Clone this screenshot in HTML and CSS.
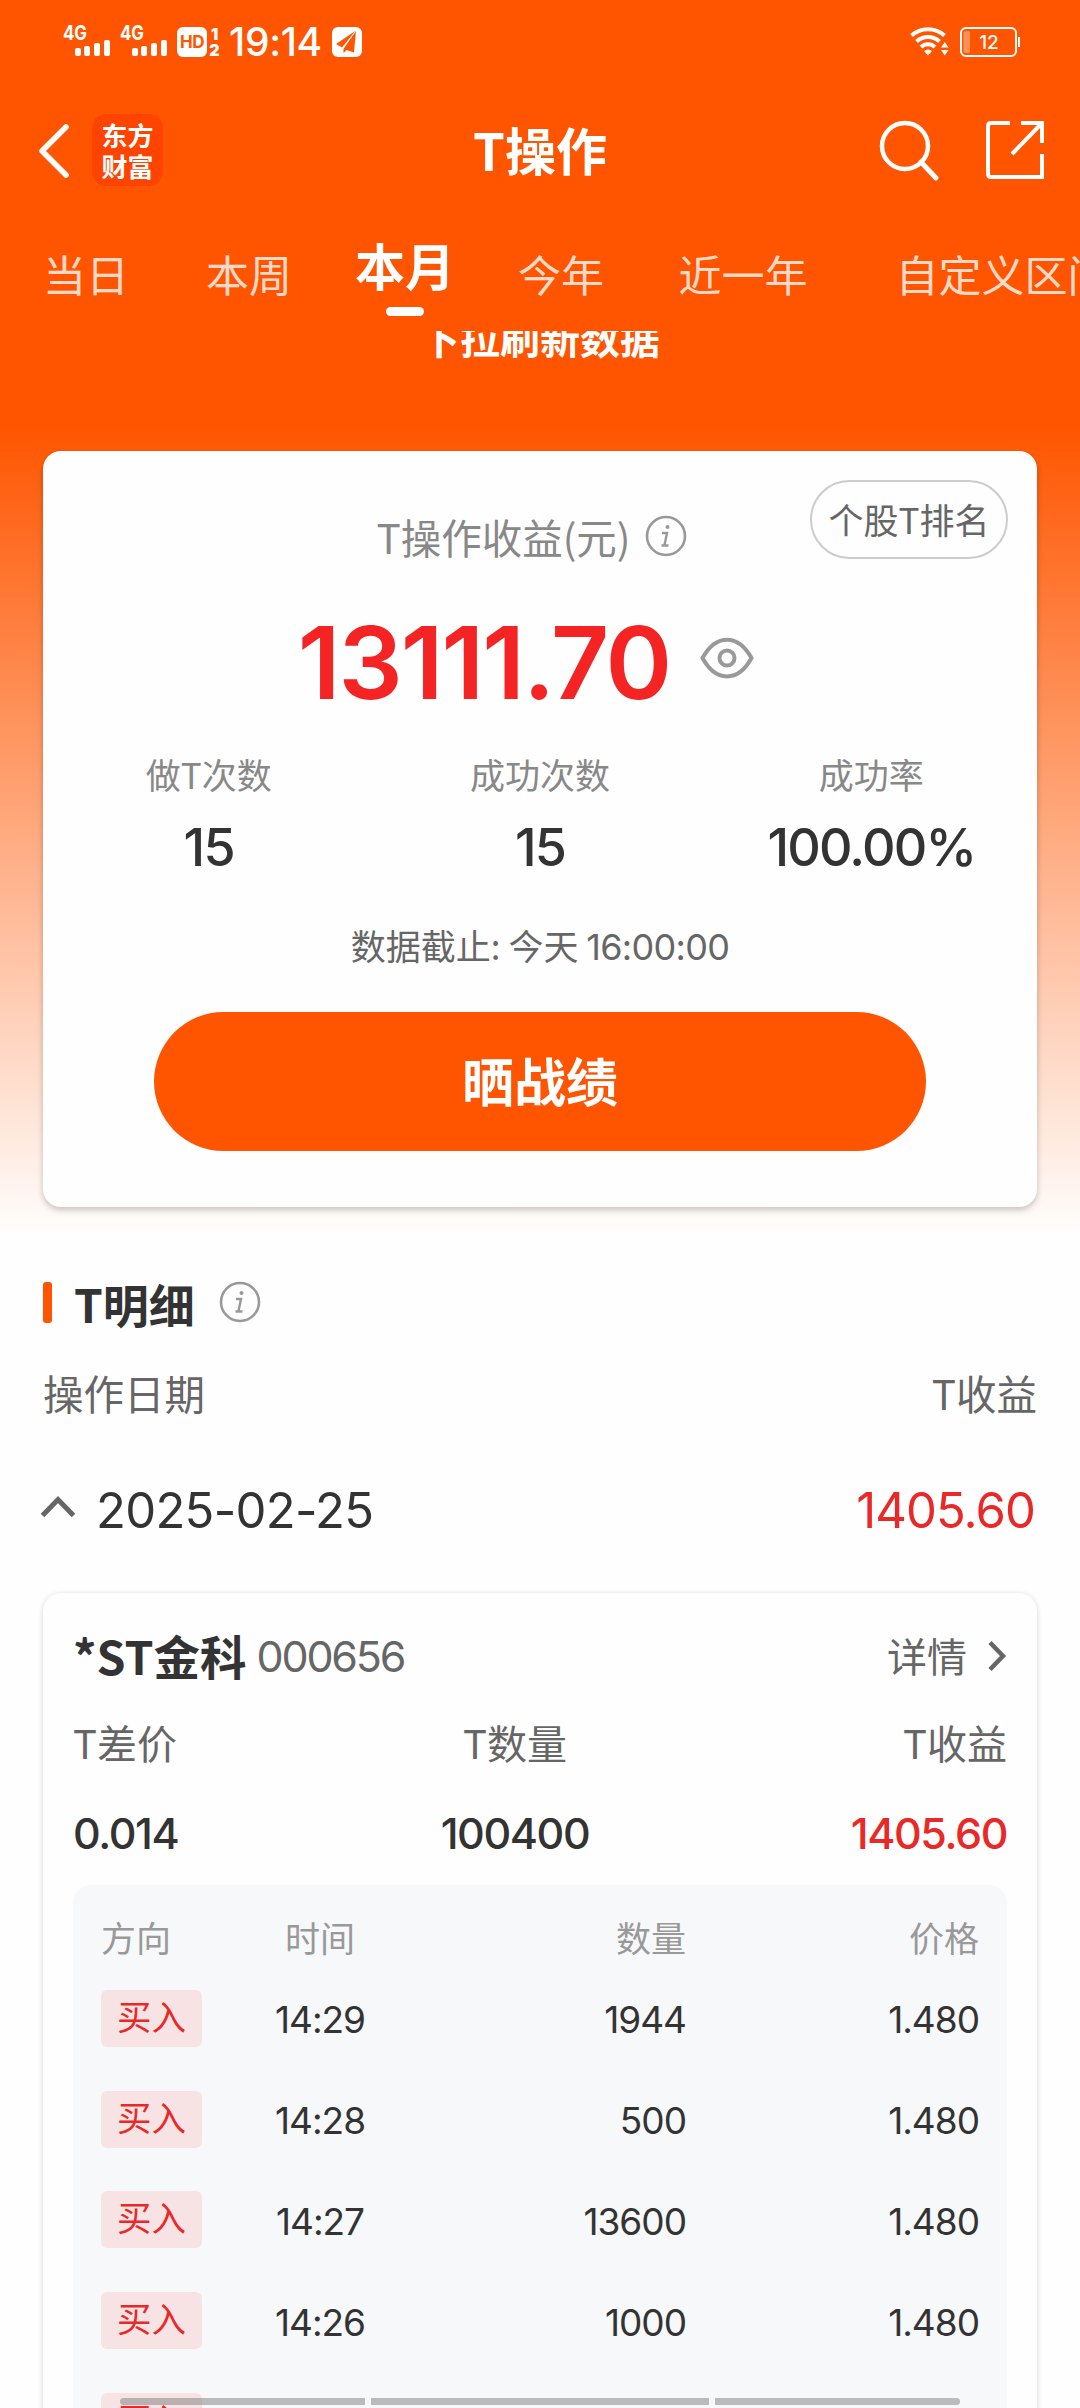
FILE: index.html
```html
<!DOCTYPE html>
<html lang="zh-CN">
<head>
<meta charset="utf-8">
<title>T操作</title>
<link rel="stylesheet" href="styles.css">
</head>
<body>
<div class="screen">
  <header class="status">
    <div class="status-left">
      <svg class="signal" width="48" height="34" viewBox="0 0 48 34"><text class="net" x="0" y="16" textLength="24" lengthAdjust="spacingAndGlyphs">4G</text><g fill="#fff"><rect x="12" y="24" width="6" height="8" rx="2"/><rect x="21" y="22" width="6" height="10" rx="2"/><rect x="31" y="19" width="6" height="13" rx="2"/><rect x="41" y="16" width="6" height="16" rx="2"/></g></svg>
      <svg class="signal second" width="48" height="34" viewBox="0 0 48 34"><text class="net" x="0" y="16" textLength="24" lengthAdjust="spacingAndGlyphs">4G</text><g fill="#fff"><rect x="12" y="24" width="6" height="8" rx="2"/><rect x="21" y="22" width="6" height="10" rx="2"/><rect x="31" y="19" width="6" height="13" rx="2"/><rect x="41" y="16" width="6" height="16" rx="2"/></g></svg>
      <span class="hd">HD</span>
      <span class="sims"><b>1</b><b>2</b></span>
      <span class="clock">19:14</span>
      <svg width="30" height="30" viewBox="0 0 30 30"><rect width="30" height="30" rx="6" fill="#fff"/><path d="M24 3.500 4 17l6 3.500zM24 3.500 22 25.500l-7.500-2.500-3 3v-4z" fill="#ff5500"/><path d="M24 3.500 10.500 21.500" stroke="#fff" stroke-width="1"/></svg>
    </div>
    <div class="status-right">
      <svg width="40" height="30" viewBox="0 0 40 30"><g fill="none" stroke="#fff" stroke-width="4"><path d="M1.500 8.500a25 25 0 0 1 33 0"/><path d="M6.500 14.500a17 17 0 0 1 23 0"/><path d="M11 20a10 10 0 0 1 14 0"/></g><path d="M14 24a6 6 0 0 1 8 0l-4 4.500zM31 20.500h7.500l-3.750-5.500zM31 23h7.500l-3.750 5.500z" fill="#fff"/></svg>
      <svg width="60" height="30" viewBox="0 0 60 30"><rect x="1" y="1" width="55" height="28" rx="5" fill="none" stroke="#fff" stroke-width="2"/><rect x="3.500" y="4" width="6.500" height="22" rx="2" fill="#fff" opacity=".35"/><rect x="58" y="10" width="2" height="10" fill="#fff"/><text class="level" x="29" y="22" text-anchor="middle">12</text></svg>
    </div>
  </header>

  <nav class="nav">
    <svg class="back" width="30" height="54" viewBox="0 0 30 54"><path d="M27 3 3 27l24 24" fill="none" stroke="#fff" stroke-width="5.500" stroke-linecap="round" stroke-linejoin="round"/></svg>
    <div class="logo"><span>东方</span><span>财富</span></div>
    <h1>T操作</h1>
    <svg class="search" width="60" height="62" viewBox="0 0 60 62"><circle cx="26" cy="26" r="23" fill="none" stroke="#fff" stroke-width="4.500"/><path d="m42 42 15 16" stroke="#fff" stroke-width="5" stroke-linecap="round"/></svg>
    <svg width="58" height="58" viewBox="0 0 58 58"><path d="M24 2H5q-3 0-3 3v48q0 3 3 3h51V33M35 2h21v20M55 3 26 33" fill="none" stroke="#fff" stroke-width="4"/></svg>
  </nav>

  <div class="tabs">
    <span>当日</span><span>本周</span><span class="active">本月</span><span>今年</span><span>近一年</span><span>自定义区间</span>
  </div>
  <div class="refresh"><p>下拉刷新数据</p></div>

  <section class="card summary">
    <div class="summary-head"><span>T操作收益(元)</span>
      <svg width="42" height="42" viewBox="0 0 42 42"><circle cx="21" cy="21" r="19" fill="none" stroke="#999" stroke-width="2.600"/><circle cx="22.500" cy="12" r="2" fill="#999"/><path d="M17 18h5l-2.500 12M16.500 30.500h7" fill="none" stroke="#999" stroke-width="2.400"/></svg>
    </div>
    <a class="rank">个股T排名</a>
    <div class="amount"><strong>13111.70</strong>
      <svg width="54" height="42" viewBox="0 0 54 42"><path d="M2.500 21C16-3.500 38-3.500 51.500 21 38 45.500 16 45.500 2.500 21z" fill="none" stroke="#999" stroke-width="4"/><circle cx="27" cy="21" r="7.500" fill="none" stroke="#999" stroke-width="4"/></svg>
    </div>
    <div class="stats">
      <div><span>做T次数</span><b>15</b></div>
      <div><span>成功次数</span><b>15</b></div>
      <div><span>成功率</span><b>100.00%</b></div>
    </div>
    <p class="deadline">数据截止: 今天 <span>16:00:00</span></p>
    <button class="share">晒战绩</button>
  </section>

  <div class="section-title"><i></i><h2>T明细</h2>
    <svg width="42" height="42" viewBox="0 0 42 42"><circle cx="21" cy="21" r="19" fill="none" stroke="#999" stroke-width="2.600"/><circle cx="22.500" cy="12" r="2" fill="#999"/><path d="M17 18h5l-2.500 12M16.500 30.500h7" fill="none" stroke="#999" stroke-width="2.400"/></svg>
  </div>
  <div class="columns"><span>操作日期</span><span>T收益</span></div>
  <div class="day">
    <svg width="36" height="24" viewBox="0 0 36 24"><path d="M2.500 20.500 18 4.500l15.500 16" fill="none" stroke="#666" stroke-width="5"/></svg>
    <span class="date">2025-02-25</span><span class="profit">1405.60</span>
  </div>

  <section class="card detail">
    <div class="stock"><b>*ST金科</b><span class="code">000656</span><span class="more">详情</span>
      <svg width="20" height="32" viewBox="0 0 20 32"><path d="m3 2.500 13 13.500L3 29.500" fill="none" stroke="#666" stroke-width="4.500"/></svg>
    </div>
    <div class="trio labels"><span>T差价</span><span>T数量</span><span>T收益</span></div>
    <div class="trio values"><span>0.014</span><span>100400</span><span class="red">1405.60</span></div>
    <div class="trades">
      <div class="row head"><span>方向</span><span>时间</span><span>数量</span><span>价格</span></div>
      <div class="row"><em>买入</em><span>14:29</span><span>1944</span><span>1.480</span></div>
      <div class="row"><em>买入</em><span>14:28</span><span>500</span><span>1.480</span></div>
      <div class="row"><em>买入</em><span>14:27</span><span>13600</span><span>1.480</span></div>
      <div class="row"><em>买入</em><span>14:26</span><span>1000</span><span>1.480</span></div>
      <div class="row"><em>买入</em></div>
    </div>
  </section>
  <div class="gesture"><i></i><i></i><i></i></div>
</div>
</body>
</html>
```
FILE: styles.css
```css
* { box-sizing: border-box; }
body { margin: 0; background: #fdfdfd; font-family: "Noto Sans CJK SC", sans-serif; color: #333; }
h1, h2, p { margin: 0; }
svg { display: block; flex: none; overflow: visible; }
i, em { font-style: normal; }

.screen {
  position: relative;
  width: 1080px;
  height: 2408px;
  overflow: hidden;
  background: linear-gradient(#ff5500 425px, #fefefe 1235px);
}

/* status bar */
.status { height: 84px; display: flex; justify-content: space-between; padding: 0 60px 0 63px; }
.status-left, .status-right { display: flex; align-items: center; }
.signal { margin-top: -2px; }
.second { margin-left: 9px; }
.net { font: 700 20px Inter, sans-serif; fill: #fff; }
.hd {
  width: 30px; height: 30px; margin-left: 9px; border-radius: 6px; background: #fff; color: #ff5500;
  font: 700 17px/30px Inter, sans-serif; letter-spacing: -.5px; text-align: center;
}
.sims { display: flex; flex-direction: column; width: 11px; margin-left: 2px; color: #fff; font: 700 16px/16px Inter, sans-serif; text-align: center; }
.clock { width: 95px; margin: 0 8px 0 9px; color: #fff; font: 500 39px/40px Inter, sans-serif; letter-spacing: -.3px; white-space: nowrap; }
.status-right { gap: 10px; }
.level { font: 500 19px Inter, sans-serif; fill: #fff; }

/* navigation */
.nav { position: relative; height: 132px; display: flex; align-items: center; padding: 0 36px 0 39px; }
.back { margin-top: 2px; }
.logo {
  width: 71px; height: 72px; margin-left: 23px; padding-top: 5px; border-radius: 14px; background: #ff4400; color: #fff;
  font-size: 26px; font-weight: 700; line-height: 31px; text-align: center;
}
.logo span { display: block; }
.nav h1 { position: absolute; left: 340px; top: 35px; width: 400px; text-align: center; color: #fff; font-size: 51px; font-weight: 700; line-height: 60px; }
.search { margin: 2px 47px 0 auto; }

/* period tabs */
.tabs {
  height: 115px; display: grid; grid-template-columns: 172px 154px 156px 158px 206px 314px; overflow: hidden;
  padding-top: 27px; color: rgba(255, 255, 255, .8); font-size: 43px; line-height: 60px; text-align: center; white-space: nowrap;
}
.tabs .active { margin-top: -9px; padding-left: 2px; color: #fff; font-size: 50px; font-weight: 700; }
.tabs .active::after { content: ""; display: block; width: 38px; height: 9px; margin: 13px auto 0; border-radius: 5px; background: #fff; }
.refresh { height: 120px; overflow: hidden; color: #fff; font-size: 40px; font-weight: 700; text-align: center; }
.refresh p { margin-top: -24px; line-height: 60px; }

/* cards */
.card { margin: 0 43px; border-radius: 18px; background: #fefefe; }
.summary { position: relative; height: 756px; box-shadow: 0 3px 6px rgba(0, 0, 0, .22); }
.summary-head { height: 170px; display: flex; align-items: center; justify-content: center; gap: 14px; padding-right: 17px; color: #888; font-size: 40.500px; }
.rank {
  position: absolute; right: 29px; top: 29px; width: 198px; height: 79px; border: 2px solid #ccc; border-radius: 40px;
  color: #666; font-size: 35px; line-height: 74px; text-align: center;
}
.amount { height: 82px; display: flex; align-items: center; justify-content: center; gap: 30px; padding-right: 28px; }
.amount strong { color: #f32423; font: 600 101px/82px Inter, sans-serif; letter-spacing: -2px; }
.amount svg { margin-top: -8px; }
.stats { display: grid; grid-template-columns: repeat(3, 1fr); padding-top: 46px; text-align: center; }
.stats div { display: flex; flex-direction: column; gap: 19px; }
.stats span { color: #888; font-size: 35px; line-height: 50px; }
.stats b { font: 500 52px/60px Inter, sans-serif; letter-spacing: -1.800px; }
.deadline { margin-top: 42px; color: #666; font-size: 35px; line-height: 50px; text-align: center; }
.deadline span { font-family: Inter, sans-serif; font-size: 36px; letter-spacing: -.700px; }
.share {
  display: block; width: 772px; height: 139px; margin: 40px auto 0; padding: 0 0 4px; border: 0; border-radius: 70px;
  background: #ff5500; color: #fff; font-family: inherit; font-size: 52px; font-weight: 700;
}

/* list header */
.section-title { height: 60px; margin: 65px 43px 0; display: flex; align-items: center; }
.section-title i { width: 9px; height: 41px; border-radius: 3px; background: #ff5500; }
.section-title h2 { margin: 2px 24px 0 22px; font-size: 46px; font-weight: 700; line-height: 56px; }
.columns { margin: 31px 43px 0; display: flex; justify-content: space-between; color: #666; font-size: 40.500px; line-height: 60px; }
.day { height: 60px; margin: 58px 45px 0 40px; display: flex; align-items: center; font: 400 49px/60px Inter, sans-serif; }
.day svg { margin-top: -9px; }
.date { margin-left: 20px; letter-spacing: -.700px; }
.profit { margin-left: auto; color: #e92828; letter-spacing: -.900px; }

/* stock detail */
.detail { height: 900px; margin-top: 52px; padding: 33px 30px 0; box-shadow: 0 1px 5px rgba(0, 0, 0, .18); }
.stock { height: 60px; display: flex; align-items: center; }
.stock b { margin-top: -2px; font-size: 46.500px; font-weight: 700; line-height: 60px; }
.code { margin-left: 10px; color: #666; font: 400 43px/60px Inter, sans-serif; letter-spacing: -2.200px; }
.more { margin: -3px 20px 0 auto; color: #666; font-size: 40px; }
.trio { display: grid; grid-template-columns: 286px 312px 1fr; line-height: 50px; text-align: center; }
.trio :first-child { text-align: left; }
.trio :last-child { text-align: right; }
.labels { margin-top: 31px; color: #666; font-size: 40px; }
.values { margin-top: 41px; font-family: Inter, sans-serif; font-size: 43px; font-weight: 500; letter-spacing: -1.400px; }
.values .red { color: #e92828; }
.trades { height: 600px; margin-top: 27px; padding: 27px 28px 0; border-radius: 18px; background: #f7f8fa; }
.row { display: grid; grid-template-columns: 160px 118px 307px 293px; height: 100.800px; align-items: center; font: 400 37px/50px Inter, sans-serif; letter-spacing: -1px; text-align: right; }
.row span { padding-top: 4px; }
.row :nth-child(2) { text-align: center; }
.head { height: 50px; margin-bottom: 6px; color: #999; font-family: "Noto Sans CJK SC", sans-serif; font-size: 35px; letter-spacing: 0; }
.head span { padding-top: 0; }
.head :first-child { text-align: left; }
.row em {
  width: 101px; height: 57px; border-radius: 6px; background: #f8e3e4; color: #e92828;
  font-family: "Noto Sans CJK SC", sans-serif; font-size: 34.500px; line-height: 51px; letter-spacing: 0; text-align: center;
}

/* system gesture bar, over the page */
.gesture { position: absolute; left: 120px; bottom: 3px; width: 840px; height: 7px; display: grid; grid-template-columns: 245px 338px 245px; gap: 6px; }
.gesture i { background: rgba(125, 125, 125, .5); }
.gesture i:first-child { border-radius: 4px 0 0 4px; }
.gesture i:last-child { border-radius: 0 4px 4px 0; }
```
